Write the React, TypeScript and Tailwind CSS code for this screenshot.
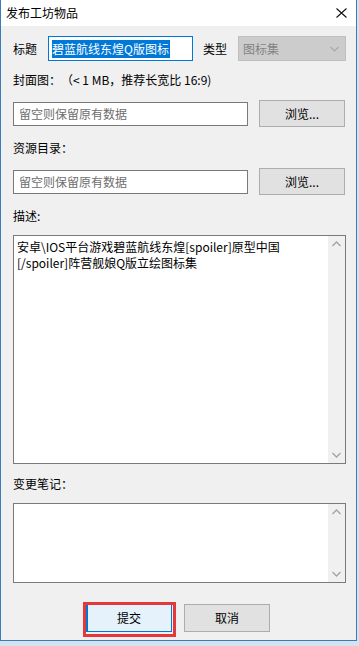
import React from "react";

const font = { fontFamily: '"Noto Sans CJK SC", "Microsoft YaHei", sans-serif' };

function ScrollArrows() {
  return (
    <div className="w-[17px] h-full bg-[#f0f0f0] flex flex-col justify-between items-center py-[5px]">
      <svg width="9" height="6" viewBox="0 0 9 6">
        <path d="M0.5 5 L4.5 1 L8.5 5" fill="none" stroke="#a3a3a3" strokeWidth="1.3" />
      </svg>
      <svg width="9" height="6" viewBox="0 0 9 6">
        <path d="M0.5 1 L4.5 5 L8.5 1" fill="none" stroke="#a3a3a3" strokeWidth="1.3" />
      </svg>
    </div>
  );
}

function PathRow() {
  return (
    <div className="mt-[12px] h-[27px] flex items-center">
      <div className="w-[235px] h-[24px] bg-white border border-[#7a7a7a] pl-[5px] flex items-center text-[12px] leading-[16px] text-[#6d6d6d]">
        留空则保留原有数据
      </div>
      <div className="ml-[11px] w-[86px] h-[27px] bg-[#e1e1e1] border border-[#adadad] flex items-center justify-center text-[12px] leading-[16px] text-black">
        浏览...
      </div>
    </div>
  );
}

export default function App() {
  return (
    <div className="relative w-[359px] h-[646px] bg-[#d4e3ef] overflow-hidden [text-spacing-trim:space-all]" style={font}>
      <div className="w-[357px] h-[641px] bg-[#f0f0f0] border-l border-r border-b border-[#3b7cba] flex flex-col">
        {/* title bar */}
        <div className="h-[26px] bg-white flex items-center justify-between pl-[5px] pr-[9px]">
          <span className="text-[12px] leading-[16px] text-black">发布工坊物品</span>
          <svg width="11" height="10" viewBox="0 0 11 10">
            <path d="M0.5 0.5 L10.5 9.5 M10.5 0.5 L0.5 9.5" stroke="#111" strokeWidth="1.1" />
          </svg>
        </div>

        <div className="pl-[12px] flex flex-col text-[12px] leading-[16px] text-black">
          {/* row 1 */}
          <div className="mt-[10px] h-[25px] flex items-center">
            <span className="w-[35px]">标题</span>
            <div className="w-[145px] h-[25px] bg-white border border-[#0078d7] pl-[3px] flex items-center">
              <span className="bg-[#0078d7] text-white leading-[18px] pr-[1px]">碧蓝航线东煌Q版图标</span>
            </div>
            <span className="ml-[10px]">类型</span>
            <div className="ml-[11px] w-[108px] h-[25px] bg-[#cccccc] border border-[#bfbfbf] pl-[4px] pr-[6px] flex items-center justify-between text-[#838383]">
              <span>图标集</span>
              <svg width="9" height="6" viewBox="0 0 9 6">
                <path d="M0.5 1 L4.5 5 L8.5 1" fill="none" stroke="#a8a8a8" strokeWidth="1.1" />
              </svg>
            </div>
          </div>

          <div className="mt-[11px] h-[16px] whitespace-pre">封面图：（&lt; 1 MB，推荐长宽比 16:9)</div>
          <PathRow />

          <div className="mt-[13px] h-[16px]">资源目录：</div>
          <PathRow />

          <div className="mt-[13px] h-[16px]">描述:</div>
          <div className="mt-[11px] w-[333px] h-[229px] bg-white border border-[#7a7a7a] flex">
            <div className="flex-1 pl-[3px] pt-[3px] leading-[16px] text-black">
              安卓\IOS平台游戏碧蓝航线东煌[spoiler]原型中国
              <br />
              [/spoiler]阵营舰娘Q版立绘图标集
            </div>
            <ScrollArrows />
          </div>

          <div className="mt-[12px] h-[16px]">变更笔记：</div>
          <div className="mt-[11px] w-[333px] h-[80px] bg-white border border-[#7a7a7a] flex">
            <div className="flex-1" />
            <ScrollArrows />
          </div>
        </div>

        <div className="mt-[21px] flex justify-center gap-[12px] pr-[1px] text-[12px] leading-[16px] text-black">
          <div className="w-[86px] h-[28px] bg-[#e5f1fb] border border-[#0078d7] shadow-[inset_1px_0_0_#0078d7] flex items-center justify-center">
            提交
          </div>
          <div className="w-[86px] h-[28px] bg-[#e1e1e1] border border-[#adadad] flex items-center justify-center">
            取消
          </div>
        </div>
      </div>

      {/* red annotation box */}
      <div className="absolute left-[83px] top-[602px] w-[93px] h-[35px] border-[3px] border-[#e5383b]" />
    </div>
  );
}
